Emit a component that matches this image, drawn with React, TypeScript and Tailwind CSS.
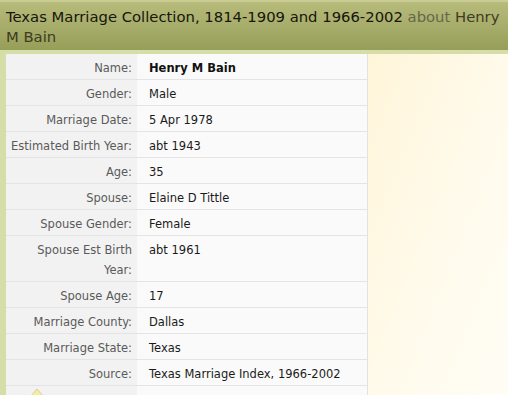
const rows: { label: string; value: string; bold?: boolean }[] = [
  { label: "Name:", value: "Henry M Bain", bold: true },
  { label: "Gender:", value: "Male" },
  { label: "Marriage Date:", value: "5 Apr 1978" },
  { label: "Estimated Birth Year:", value: "abt 1943" },
  { label: "Age:", value: "35" },
  { label: "Spouse:", value: "Elaine D Tittle" },
  { label: "Spouse Gender:", value: "Female" },
  { label: "Spouse Est Birth Year:", value: "abt 1961" },
  { label: "Spouse Age:", value: "17" },
  { label: "Marriage County:", value: "Dallas" },
  { label: "Marriage State:", value: "Texas" },
  { label: "Source:", value: "Texas Marriage Index, 1966-2002" },
];

export default function App() {
  return (
    <div className="relative w-[508px] h-[395px] overflow-hidden flex flex-col font-['DejaVu_Sans',sans-serif]">
      {/* header */}
      <div className="h-[50px] shrink-0 pl-[6px] pt-[5px] border-t-[2px] border-[#c9cd93] bg-gradient-to-b from-[#b7bb7b] to-[#979e59] text-[14.8px] leading-[20px] text-[#16160c]">
        <p>
          Texas Marriage Collection, 1814-1909 and 1966-2002 <span className="text-[#66664e]">about</span>{" "}
          <span className="text-[#3c3c22]">Henry M Bain</span>
        </p>
      </div>

      {/* body */}
      <div className="flex-1 flex pt-[4px] pl-[6px] bg-[#d5dda8]">
        <div className="w-[362px] shrink-0 self-start border-r border-[#e2e2e2] text-[11.5px]">
          {rows.map((r) => (
            <div key={r.label} className="flex border-b border-[#e4e4e4]">
              <div className="w-[131px] shrink-0 bg-[#f2f2f2] pr-[5px] pl-[3px] pt-[4px] pb-[1px] leading-[20px] text-right text-[#5a5a5a]">
                {r.label}
              </div>
              <div
                className={
                  r.bold
                    ? "flex-1 bg-[#fafafa] pl-[12px] pt-[4px] pb-[1px] leading-[20px] font-bold text-[#111]"
                    : "flex-1 bg-[#fafafa] pl-[12px] pt-[4px] pb-[1px] leading-[20px] text-[#1a1a1a]"
                }
              >
                {r.value}
              </div>
            </div>
          ))}
          <div className="flex h-[20px]">
            <div className="w-[131px] bg-[#f2f2f2]" />
            <div className="flex-1 bg-[#fafafa]" />
          </div>
        </div>
        <div className="flex-1 bg-gradient-to-br from-[#fff5d9] via-[#fffaea] to-[#fffdf6]" />
      </div>

      {/* callout tip peeking from below */}
      <svg className="absolute left-[30px] top-[388px]" width="14" height="8" viewBox="0 0 14 8">
        <path d="M1 8 L7 1 L13 8 Z" fill="#f6eca8" stroke="#d9cf88" strokeWidth="1" />
      </svg>
    </div>
  );
}
